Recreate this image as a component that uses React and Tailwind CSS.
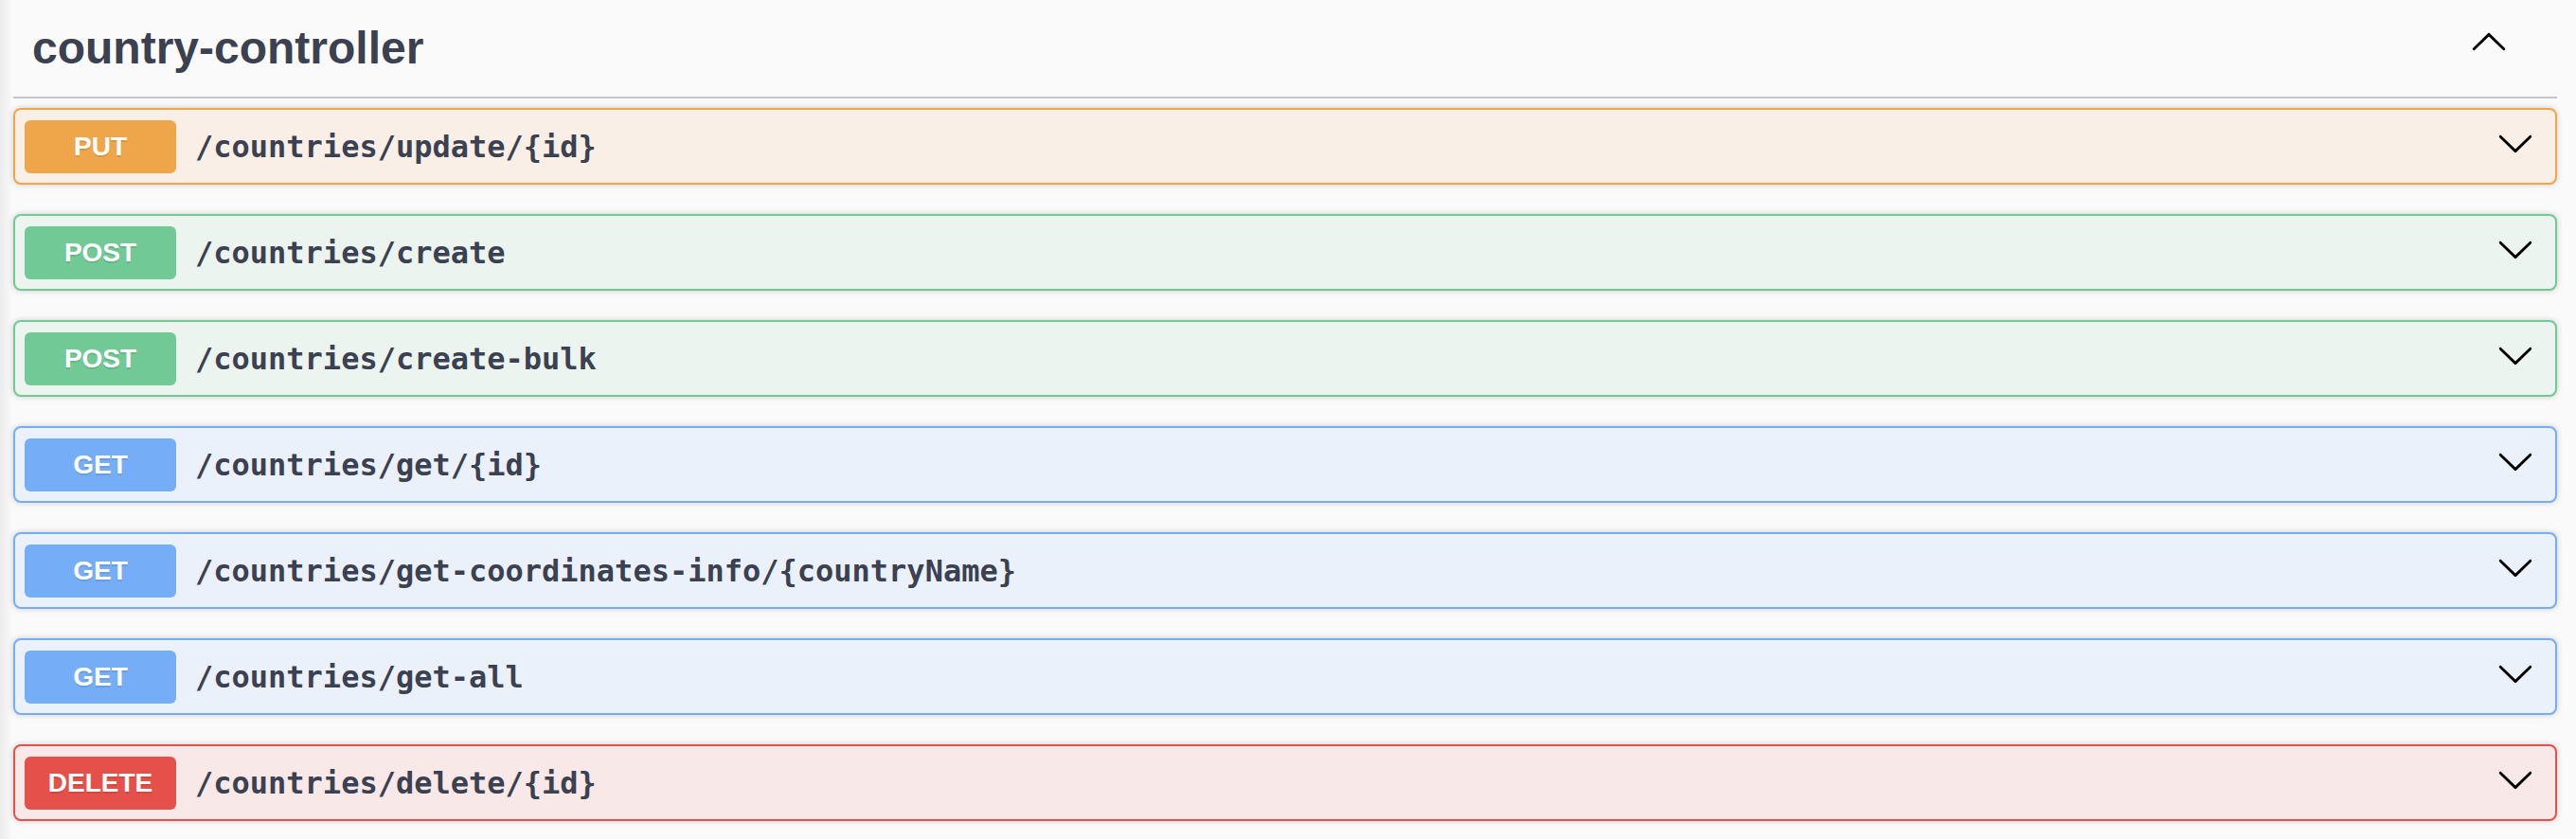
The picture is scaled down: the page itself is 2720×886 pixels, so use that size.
import React from 'react'

const ops = [
  { method: 'PUT', path: '/countries/update/{id}', badge: 'bg-[#efa64b]', box: 'bg-[#f9efe6] border-[#efa64b]' },
  { method: 'POST', path: '/countries/create', badge: 'bg-[#71c995]', box: 'bg-[#ecf4ef] border-[#71c995]' },
  { method: 'POST', path: '/countries/create-bulk', badge: 'bg-[#71c995]', box: 'bg-[#ecf4ef] border-[#71c995]' },
  { method: 'GET', path: '/countries/get/{id}', badge: 'bg-[#75adf6]', box: 'bg-[#ebf1fa] border-[#75adf6]' },
  { method: 'GET', path: '/countries/get-coordinates-info/{countryName}', badge: 'bg-[#75adf6]', box: 'bg-[#ebf1fa] border-[#75adf6]' },
  { method: 'GET', path: '/countries/get-all', badge: 'bg-[#75adf6]', box: 'bg-[#ebf1fa] border-[#75adf6]' },
  { method: 'DELETE', path: '/countries/delete/{id}', badge: 'bg-[#e5514a]', box: 'bg-[#f8e8e7] border-[#e5514a]' },
]

function Arrow({ className }) {
  return (
    <svg viewBox="0 0 20 20" width="40" height="40" className={className}>
      <path
        fill="#000"
        d="M17.418 6.109c.272-.268.709-.268.979 0s.271.701 0 .969l-7.908 7.83c-.27.268-.707.268-.979 0l-7.908-7.83c-.27-.268-.27-.701 0-.969.271-.268.709-.268.979 0L10 13.25l7.418-7.141z"
      />
    </svg>
  )
}

function OpBlock({ op }) {
  return (
    <div className={`flex items-center h-[81px] border-2 rounded-[8px] px-[10px] shadow-[0_0_6px_rgba(0,0,0,0.19)] ${op.box}`}>
      <span
        className={`flex items-center justify-center w-[160px] h-[56px] rounded-[6px] text-white text-[28px] font-bold font-['Liberation_Sans',Arial,sans-serif] [text-shadow:0_2px_0_rgba(0,0,0,0.1)] ${op.badge}`}
      >
        {op.method}
      </span>
      <span className="flex-1 px-[20px] text-[32px] font-bold text-[#3b4151] font-['DejaVu_Sans_Mono',monospace]">
        {op.path}
      </span>
      <Arrow className="mr-[12px] mb-[8px] shrink-0" />
    </div>
  )
}

export default function App() {
  return (
    <div className="min-h-screen w-full bg-[linear-gradient(to_right,#ececec,#fafafa_14px)] pl-[14px] pr-[20px]">
      <div className="flex items-start h-[104px] border-b-2 border-[#c5c6cb]">
        <h3 className="flex-1 pl-[20px] pt-[20px] leading-[62px] text-[48px] font-bold text-[#3b4151] font-['Liberation_Sans',Arial,sans-serif]">
          country-controller
        </h3>
        <Arrow className="rotate-180 mt-[25px] mr-[52px]" />
      </div>
      <div className="flex flex-col gap-[31px] pt-[10px]">
        {ops.map((op, i) => (
          <OpBlock key={i} op={op} />
        ))}
      </div>
    </div>
  )
}
